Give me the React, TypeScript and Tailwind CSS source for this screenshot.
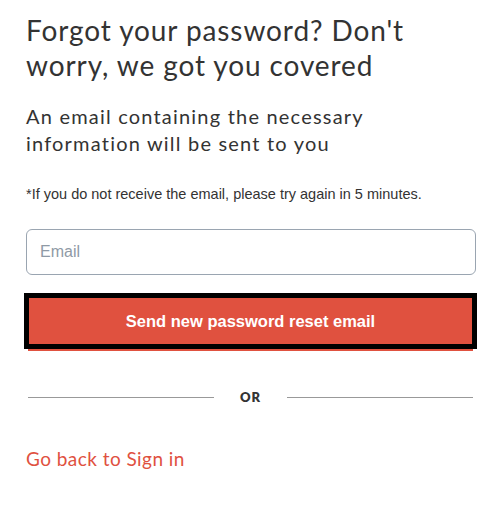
import React, { useState } from "react";

const ForgotPassword = () => {
  const [email, setEmail] = useState("");
  return (
    <div className="w-[483px] min-h-[515px] bg-white pl-[26px] pt-[13px] font-['Lato','Noto_Sans',sans-serif] text-[#333]">
      <h1 className="w-[440px] text-[28px] leading-[35px] font-normal tracking-[0.9px]">
        Forgot your password? Don't worry, we got you covered
      </h1>
      <p className="mt-[20px] w-[440px] text-[20px] leading-[27px] tracking-[1.2px]">
        An email containing the necessary information will be sent to you
      </p>
      <p className="mt-[29px] font-['Liberation_Sans',sans-serif] text-[14.5px] leading-[17px] text-[#333]">
        *If you do not receive the email, please try again in 5 minutes.
      </p>
      <input
        type="email"
        value={email}
        onChange={(e) => setEmail(e.target.value)}
        placeholder="Email"
        className="mt-[26px] block h-[46px] w-[450px] rounded-[6px] border border-[#9aa5b1] px-[13px] font-['Liberation_Sans',sans-serif] text-[16px] text-[#333] placeholder:text-[#8f9aa6] outline-none"
      />
      <button className="mt-[18px] -ml-[2px] flex h-[56px] w-[453px] items-center justify-center border-[5px] border-black bg-[#e0513f] font-['Liberation_Sans',sans-serif] text-[16.5px] font-bold text-white shadow-[0_6px_0_-4px_#e0513f]">
        Send new password reset email
      </button>
      <div className="mt-[39px] ml-[2px] flex w-[445px] items-center">
        <div className="h-px flex-1 bg-[#999]" />
        <span className="w-[73px] text-center text-[13px] font-extrabold tracking-[1px] text-[#333]">
          OR
        </span>
        <div className="h-px flex-1 bg-[#999]" />
      </div>
      <a
        href="#"
        className="mt-[39px] inline-block text-[19px] leading-[24px] tracking-[0.45px] text-[#e0513f]"
      >
        Go back to Sign in
      </a>
    </div>
  );
};

export default function App() {
  return <ForgotPassword />;
}
